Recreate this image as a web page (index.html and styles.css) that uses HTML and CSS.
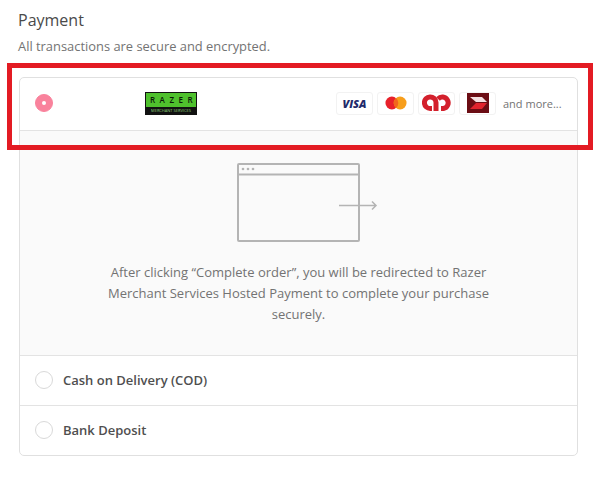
FILE: index.html
```html
<!DOCTYPE html>
<html lang="en">
<head>
    <meta charset="UTF-8">
    <title>Payment</title>
    <link rel="stylesheet" href="styles.css">
</head>
<body>

<section class="payment">
    <h2>Payment</h2>
    <p class="subtitle">All transactions are secure and encrypted.</p>

    <div class="methods">
        <!-- Razer row -->
        <div class="row row-first">
            <span class="radio radio-on"></span>
            <div class="razer-col">
                <div class="razer-logo">
                    <span class="razer-name">RAZER</span>
                    <span class="razer-sub">MERCHANT SERVICES</span>
                </div>
            </div>
            <div class="cards">
                <span class="card"><span class="visa">VISA</span></span>
                <span class="card">
                    <svg width="22" height="14" viewBox="0 0 24 15">
                        <circle cx="7.500" cy="7.500" r="7" fill="#e8202a"/>
                        <circle cx="16.500" cy="7.500" r="7" fill="#f79e1b"/>
                        <path d="M12 2.100a7 7 0 0 1 0 10.800a7 7 0 0 1 0-10.800z" fill="#f2661c"/>
                    </svg>
                </span>
                <span class="card">
                    <svg width="30" height="18" viewBox="0 0 30 18">
                        <path d="M14 17V8.500A5.800 5.800 0 1 0 8.500 14.500H10" fill="none" stroke="#d3202c" stroke-width="5"/>
                        <path d="M16 5A5.800 5.800 0 1 1 21.500 14.500H19" fill="none" stroke="#d3202c" stroke-width="5"/>
                    </svg>
                </span>
                <span class="card">
                    <svg width="22" height="20" viewBox="0 0 22 20">
                        <rect width="22" height="20" fill="#6b0d14"/>
                        <path d="M3 4H15L20 9H9z" fill="#f4dfe0"/>
                        <path d="M3 16H15L20 10H9z" fill="#e0242e"/>
                    </svg>
                </span>
                <span class="more">and more...</span>
            </div>
        </div>

        <!-- Redirect notice -->
        <div class="notice">
            <svg class="browser" width="144" height="82" viewBox="0 0 144 82">
                <rect x="1" y="1" width="121" height="77" rx="1" fill="none" stroke="#b4b4b4" stroke-width="2"/>
                <path d="M1 11.500H122" stroke="#b4b4b4" stroke-width="2"/>
                <circle cx="6" cy="6" r="1.300" fill="#b4b4b4"/>
                <circle cx="11" cy="6" r="1.300" fill="#b4b4b4"/>
                <circle cx="16" cy="6" r="1.300" fill="#b4b4b4"/>
                <path d="M102 42.500H139M135 38.500L139 42.500L135 46.500" fill="none" stroke="#b4b4b4" stroke-width="1.500"/>
            </svg>
            <p>After clicking “Complete order”, you will be redirected to Razer Merchant Services Hosted Payment to complete your purchase securely.</p>
        </div>

        <div class="row">
            <span class="radio"></span>
            <span class="label">Cash on Delivery (COD)</span>
        </div>
        <div class="row">
            <span class="radio"></span>
            <span class="label">Bank Deposit</span>
        </div>
    </div>
</section>

<!-- Red box drawn on top of the screenshot -->
<div class="highlight"></div>

</body>
</html>
```

FILE: styles.css
```css
body {
    margin: 0;
    padding: 0;
    background-color: #fff;
    font-family: "Open Sans", "Noto Sans", sans-serif;
    color: #545454;
}

.payment {
    padding: 9px 22px 0 18px;
}

h2 {
    margin: 0;
    font-size: 16px;
    line-height: 22px;
    font-weight: 400;
    color: #4a4a4a;
}

.subtitle {
    margin: 7px 0 0;
    font-size: 12.900px;
    line-height: 17px;
    color: #737373;
}

.methods {
    margin: 22px 0 0 1px;
    border: 1px solid #e0e0e0;
    border-radius: 5px;
    height: 379px;
    box-sizing: border-box;
}

.row {
    display: flex;
    align-items: center;
    height: 48px;
    padding-bottom: 1px;
    padding-left: 15px;
    border-top: 1px solid #e3e3e3;
}

.row-first {
    height: 50px;
    padding-bottom: 2px;
    border-top: none;
}

.radio {
    width: 16px;
    height: 16px;
    border: 1px solid #d9d9d9;
    border-radius: 50%;
    flex-shrink: 0;
    margin-right: 10px;
}

.radio-on {
    position: relative;
    background-color: #f9829c;
    border-color: #f9829c;
}

.radio-on::after {
    content: "";
    position: absolute;
    top: 6px;
    left: 6px;
    width: 4px;
    height: 4px;
    border-radius: 50%;
    background-color: #fff;
}

.label {
    font-size: 13px;
    font-weight: 600;
    color: #4f4f4f;
}

.razer-col {
    width: 143px;
    padding-left: 82px;
    box-sizing: border-box;
}

.razer-logo {
    width: 52px;
    height: 23px;
    background-color: #111;
    display: flex;
    flex-direction: column;
    align-items: stretch;
    box-sizing: border-box;
    padding: 1px;
    overflow: hidden;
}

.razer-name {
    background-color: #4fc12d;
    color: #0b1a08;
    font-size: 8px;
    line-height: 14px;
    height: 14px;
    letter-spacing: 4.500px;
    padding-left: 4px;
    text-align: center;
    font-weight: 600;
}

.razer-sub {
    color: #8fce7a;
    font-size: 4px;
    line-height: 7px;
    text-align: center;
    white-space: nowrap;
}

.cards {
    display: flex;
    align-items: center;
    gap: 4px;
    margin-left: 130px;
}

.card {
    display: flex;
    align-items: center;
    justify-content: center;
    width: 35px;
    height: 21px;
    border: 1px solid #f2f2f2;
    border-radius: 3px;
    background-color: #fff;
}

.visa {
    font-size: 11px;
    font-weight: 800;
    font-style: italic;
    color: #1f2a6b;
}

.more {
    margin-left: 3px;
    font-size: 11px;
    color: #737373;
    white-space: nowrap;
}

.notice {
    height: 225px;
    box-sizing: border-box;
    background-color: #fafafa;
    border-top: 1px solid #e3e3e3;
    padding-top: 32px;
    text-align: center;
}

.browser {
    display: block;
    margin-left: 217px;
}

.notice p {
    margin: 17px auto 0;
    width: 400px;
    font-size: 13px;
    line-height: 21px;
    color: #737373;
}

.highlight {
    position: absolute;
    left: 7px;
    top: 63px;
    width: 586px;
    height: 87px;
    box-sizing: border-box;
    border: 5px solid #e31b23;
}
```
